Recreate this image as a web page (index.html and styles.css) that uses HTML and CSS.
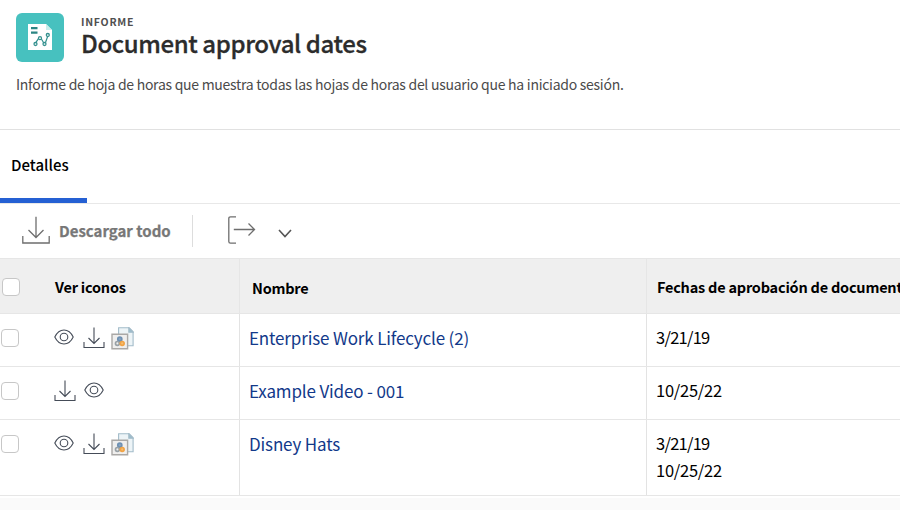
FILE: index.html
```html
<!DOCTYPE html>
<html lang="es">
<head>
<meta charset="utf-8">
<title>Document approval dates</title>
<link rel="stylesheet" href="styles.css">
</head>
<body>
<svg class="symbols" aria-hidden="true">
  <symbol id="eye" viewBox="0 0 20 16"><path d="M.8 8C3 3.400 6.200 1 10 1s7 2.400 9.200 7C17 12.600 13.800 15 10 15S3 12.600.8 8Z"/><circle cx="10" cy="8" r="3.800"/></symbol>
  <symbol id="download" viewBox="0 0 22 22"><path d="M11 .5V16M5.500 11l5.500 5.500L16.500 11M1 15v5.500h20V15"/></symbol>
  <symbol id="proof" viewBox="0 0 23 23">
    <path d="M7.600.8h10.600l3.900 4v14H7.600Z" fill="#edf4f7" stroke="#a3bcc9"/>
    <path d="M17.800.8v4.400h4.300Z" fill="#9bbccc" stroke="#a3bcc9"/>
    <path d="M1 7.300h15.600v14.400H1Z" fill="#efeeed" stroke="#aaa8a6" stroke-width="1.400"/>
    <g fill="none" stroke-width="1.700"><circle cx="8.800" cy="12.200" r="2" stroke="#6f91b3" fill="#88a4c0"/><circle cx="6.400" cy="16.400" r="1.900" stroke="#99a1a6"/><circle cx="11.200" cy="16.400" r="1.900" stroke="#f1a344" fill="#f6bd72"/></g>
  </symbol>
</svg>
<header class="header">
  <div class="identity">
    <svg class="logo" viewBox="0 0 48 49">
      <rect width="48" height="49" rx="6" fill="#47c1bf"/>
      <path d="M12 11h18l6 6v20H12Z" fill="#fff"/>
      <path d="M30 11l6 6h-6Z" fill="#c8eeec"/>
      <path d="M15 15.200h6.500M15 19.700h6.500" stroke="#2b8583" stroke-width="2.200"/>
      <path d="M19.800 29.700l3.300-5M24.800 25l3 5M29.500 29.500l2.300-6.500" stroke="#35918f" stroke-width="1.200"/>
      <g fill="#fff" stroke="#35918f" stroke-width="1.300"><circle cx="19.500" cy="31" r="1.500"/><circle cx="24" cy="25.200" r="1.500"/><circle cx="28.500" cy="31" r="1.500"/><circle cx="31.800" cy="22" r="1.500"/></g>
    </svg>
    <div class="titles">
      <div class="kind"><span>INFORME</span></div>
      <h1><span>Document approval dates</span></h1>
    </div>
  </div>
  <p class="summary"><span>Informe de hoja de horas que muestra todas las hojas de horas del usuario que ha iniciado sesión.</span></p>
</header>
<nav class="tabs"><div class="tab"><span>Detalles</span></div></nav>
<div class="toolbar">
  <svg class="download-all" viewBox="0 0 28 29"><path d="M14 .8V21.500M6.500 14l7.500 7.500 7.500-7.500M.8 20v7h26.400v-7"/></svg>
  <span class="download-label">Descargar todo</span>
  <i class="divider"></i>
  <svg class="export" viewBox="0 0 28 28"><path d="M8 .8H2.500Q.8.8.8 2.500v23q0 1.700 1.700 1.700H8M5.800 13.500H26.500M20.500 7.500l6 6-6 6"/></svg>
  <svg class="chevron" viewBox="0 0 14 9"><path d="M1 1l6 6.500L13 1"/></svg>
</div>
<main class="table">
  <div class="row head">
    <div class="cell icons"><i class="check"></i><b class="h-icons">Ver iconos</b></div>
    <div class="cell name"><b class="h-name">Nombre</b></div>
    <div class="cell dates"><b class="h-dates">Fechas de aprobación de documentos</b></div>
  </div>
  <div class="row">
    <div class="cell icons"><i class="check"></i><svg class="eye"><use href="#eye"/></svg><svg class="down"><use href="#download"/></svg><svg class="proof"><use href="#proof"/></svg></div>
    <div class="cell name"><a>Enterprise Work Lifecycle (2)</a></div>
    <div class="cell dates"><span class="short">3/21/19</span></div>
  </div>
  <div class="row">
    <div class="cell icons"><i class="check"></i><svg class="down"><use href="#download"/></svg><svg class="eye"><use href="#eye"/></svg></div>
    <div class="cell name"><a>Example Video - 001</a></div>
    <div class="cell dates"><span>10/25/22</span></div>
  </div>
  <div class="row last">
    <div class="cell icons"><i class="check"></i><svg class="eye"><use href="#eye"/></svg><svg class="down"><use href="#download"/></svg><svg class="proof"><use href="#proof"/></svg></div>
    <div class="cell name"><a>Disney Hats</a></div>
    <div class="cell dates"><span class="short">3/21/19</span><span>10/25/22</span></div>
  </div>
</main>
<footer class="footer"></footer>
</body>
</html>
```
FILE: styles.css
```css
* { box-sizing: border-box; }
body { margin: 0; height: 510px; overflow: hidden; display: flex; flex-direction: column; background: #fff; color: #000; font-family: "Noto Sans CJK JP", "Noto Sans", sans-serif; }
svg { display: block; flex: none; fill: none; }
.symbols { display: none; }
.header { height: 130px; flex: none; padding: 13px 16px 0; border-bottom: 1px solid #e1e1e1; }
.identity { display: flex; gap: 17px; }
.logo { width: 48px; height: 49px; }
.titles { white-space: nowrap; }
.kind { margin-top: 1px; font-size: 10.5px; font-weight: 700; line-height: 16px; letter-spacing: .75px; color: #505050; }
h1 { margin: -2px 0 0; font-size: 24px; font-weight: 500; line-height: 30px; letter-spacing: -.4px; -webkit-text-stroke: .3px #2c2c2c; color: #2c2c2c; }
.summary { margin: 11px 0 0; font-size: 14px; line-height: 22px; letter-spacing: -.27px; white-space: nowrap; color: #4b4b4b; }
.tabs { height: 74px; flex: none; display: flex; border-bottom: 1px solid #e8e8e8; }
.tab { width: 87px; height: 73px; padding: 24px 0 0 11px; border-bottom: 5px solid #2560d3; font-size: 15px; font-weight: 500; line-height: 22px; white-space: nowrap; }
.toolbar { height: 54px; flex: none; display: flex; align-items: center; padding-left: 22px; }
.toolbar svg { stroke: #6e6e6e; stroke-width: 1.3; }
.toolbar .download-all { width: 28px; height: 29px; margin: -2px 9px 0 0; }
.download-label { width: 133px; font-size: 15px; font-weight: 700; line-height: 22px; color: #777; white-space: nowrap; -webkit-text-stroke: .25px #777; }
.divider { width: 1px; height: 32px; background: #ddd; margin-right: 35px; }
.export { width: 28px; height: 28px; margin-top: -2px; }
.toolbar .chevron { width: 14px; height: 9px; margin: 5px 0 0 22px; stroke: #555; stroke-width: 1.6; }
.table { flex: none; border-top: 1px solid #e6e6e6; }
.row { height: 53px; display: grid; grid-template-columns: 240px 407px 1fr; border-bottom: 1px solid #e6e6e6; }
.head { height: 55px; background: #efefef; }
.last { height: 76px; }
.cell { min-width: 0; overflow: hidden; white-space: nowrap; border-right: 1px solid #e3e3e3; }
.cell.dates { border-right: 0; }
.icons { display: flex; align-items: flex-start; padding: 15px 0 0 1px; }
.check { flex: none; width: 18px; height: 18px; border: 1px solid #c7c7c7; border-radius: 4px; background: #fff; margin-right: 35px; }
.icons svg { stroke: #454c58; stroke-width: 1.1; }
.eye { width: 20px; height: 16px; }
.down { width: 22px; height: 22px; margin: -2px 0 0 9px; }
.proof { width: 23px; height: 23px; margin: -2px 0 0 6px; }
.check + .down { margin-left: 0; }
.down + .eye { margin-left: 8px; }
.name { padding: 10px 0 0 9px; font-size: 17px; line-height: 27px; letter-spacing: -.15px; }
.name a { color: #12398a; }
.dates { padding: 10px 0 0 9px; font-size: 16.5px; line-height: 27px; letter-spacing: -.25px; }
.dates span { display: block; width: max-content; }
.dates .short { letter-spacing: -.75px; }
.head .icons { padding: 19px 0 0 2px; }
.head b { font-size: 14.5px; font-weight: 700; line-height: 22px; letter-spacing: -.22px; }
.head .h-icons { margin-top: -2px; }
.head .name { padding: 14px 0 0 12px; }
.head .dates { padding: 14px 0 0 10px; }
.head .cell { border-color: #e6e6e6; }
.footer { flex: 1; margin-top: 2px; background: #fafafa; }
```
